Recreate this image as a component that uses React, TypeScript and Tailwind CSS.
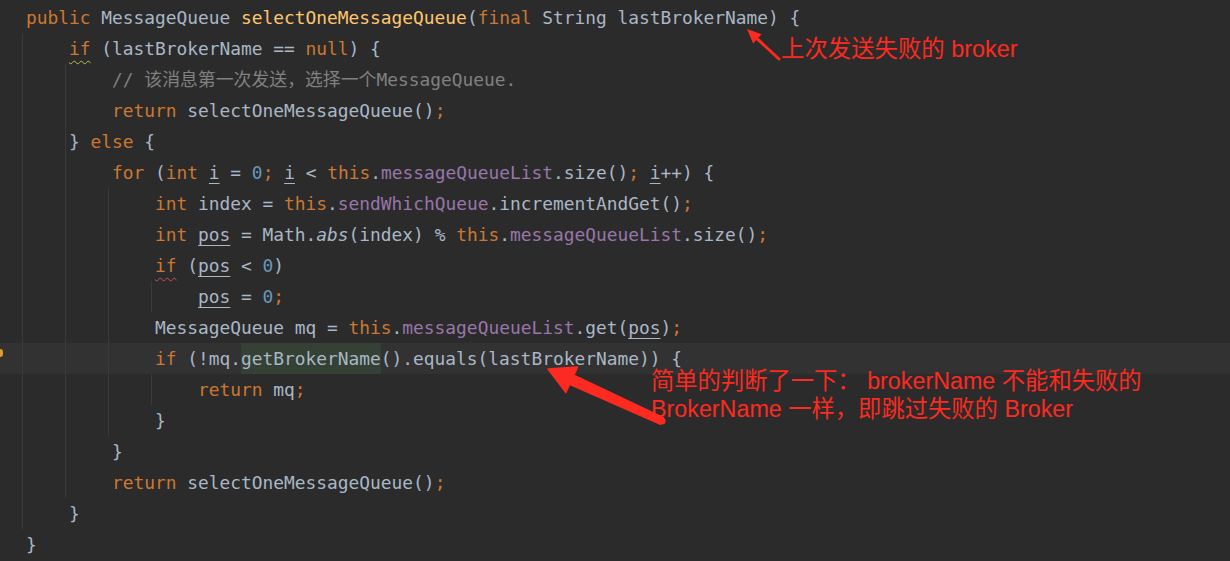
import React from "react";

type Tok = [string, string];

const S: Record<string, string> = {
  k: "text-[#cc7832]",
  p: "text-[#a9b7c6]",
  m: "text-[#ffc66d]",
  f: "text-[#9876aa]",
  n: "text-[#6897bb]",
  c: "text-[#808080]",
  i: "text-[#a9b7c6] italic",
  u: "text-[#a9b7c6] underline decoration-[#a9b7c6] underline-offset-[4px] decoration-1",
  wy: "text-[#cc7832] underline decoration-wavy decoration-[#bcbc4c] underline-offset-[5px] decoration-1",
  wr: "text-[#cc7832] underline decoration-wavy decoration-[#c9504c] underline-offset-[5px] decoration-1",
  g: "text-[#a9b7c6] bg-[#344134] inline-block",
};

type Line = { toks: Tok[]; guides: number[] };

const raw: Tok[][] = [
  [["public ", "k"], ["MessageQueue ", "p"], ["selectOneMessageQueue", "m"], ["(", "p"], ["final ", "k"], ["String lastBrokerName) {", "p"]],
  [["    ", "p"], ["if", "wy"], [" (lastBrokerName == ", "p"], ["null", "k"], [") {", "p"]],
  [["        // 该消息第一次发送，选择一个MessageQueue.", "c"]],
  [["        ", "p"], ["return ", "k"], ["selectOneMessageQueue()", "p"], [";", "k"]],
  [["    } ", "p"], ["else ", "k"], ["{", "p"]],
  [["        ", "p"], ["for ", "k"], ["(", "p"], ["int ", "k"], ["i", "u"], [" = ", "p"], ["0", "n"], ["; ", "k"], ["i", "u"], [" < ", "p"], ["this", "k"], [".", "p"], ["messageQueueList", "f"], [".size()", "p"], ["; ", "k"], ["i", "u"], ["++) {", "p"]],
  [["            ", "p"], ["int ", "k"], ["index = ", "p"], ["this", "k"], [".", "p"], ["sendWhichQueue", "f"], [".incrementAndGet()", "p"], [";", "k"]],
  [["            ", "p"], ["int ", "k"], ["pos", "u"], [" = Math.", "p"], ["abs", "i"], ["(index) % ", "p"], ["this", "k"], [".", "p"], ["messageQueueList", "f"], [".size()", "p"], [";", "k"]],
  [["            ", "p"], ["if", "wr"], [" (", "p"], ["pos", "u"], [" < ", "p"], ["0", "n"], [")", "p"]],
  [["                ", "p"], ["pos", "u"], [" = ", "p"], ["0", "n"], [";", "k"]],
  [["            MessageQueue mq = ", "p"], ["this", "k"], [".", "p"], ["messageQueueList", "f"], [".get(", "p"], ["pos", "u"], [")", "p"], [";", "k"]],
  [["            ", "p"], ["if ", "k"], ["(!mq.", "p"], ["getBrokerName", "g"], ["().equals(lastBrokerName)) {", "p"]],
  [["                ", "p"], ["return ", "k"], ["mq", "p"], [";", "k"]],
  [["            }", "p"]],
  [["        }", "p"]],
  [["        ", "p"], ["return ", "k"], ["selectOneMessageQueue()", "p"], [";", "k"]],
  [["    }", "p"]],
  [["}", "p"]],
];

// indent guide x-positions per line
const guideMap: number[][] = [
  [],
  [22],
  [22, 65],
  [22, 65],
  [22, 65],
  [22, 65],
  [22, 65, 108],
  [22, 65, 108],
  [22, 65, 108],
  [22, 65, 108, 151],
  [22, 65, 108],
  [22, 65, 108],
  [22, 65, 108, 151],
  [22, 65, 108],
  [22, 65],
  [22, 65],
  [22],
  [],
];

const lines: Line[] = raw.map((toks, i) => ({ toks, guides: guideMap[i] }));

function CodeLine({ line, active }: { line: Line; active: boolean }) {
  return (
    <div
      className={
        active
          ? "relative h-[31px] leading-[31px] whitespace-pre pl-[26px] bg-[#323232]"
          : "relative h-[31px] leading-[31px] whitespace-pre pl-[26px]"
      }
    >
      {line.guides.map((x) => (
        <span key={x} className="absolute top-0 bottom-0 w-px bg-[#3a3a3a]" style={{ left: x }} />
      ))}
      {line.toks.map(([t, s], j) => (
        <span key={j} className={"relative " + S[s]}>
          {t}
        </span>
      ))}
    </div>
  );
}

export default function App() {
  return (
    <div className="relative w-[1230px] h-[561px] overflow-hidden bg-[#2b2b2b]">
      <div className="flex flex-col pt-[2px] font-['DejaVu_Sans_Mono','Noto_Sans_CJK_SC',monospace] text-[17.86px]">
        {lines.map((line, idx) => (
          <CodeLine key={idx} line={line} active={idx === 11} />
        ))}
      </div>

      <div className="absolute left-0 top-[349px] w-[3px] h-[8px] rounded-r-sm bg-[#e39b2e]" />

      <svg className="absolute left-0 top-0" width="1230" height="561" viewBox="0 0 1230 561">
        <line x1="757" y1="38.6" x2="779" y2="59" stroke="#fc2a20" strokeWidth="3" strokeLinecap="round" />
        <polygon points="747,29 753.1,43.4 761.6,34.2" fill="#fc2a20" />
        <polygon
          points="548,369 577.5,367.1 573.8,375.3 663.5,417.8 660.5,424.2 569.6,384.4 565.9,392.5"
          fill="#fc2a20"
          stroke="#fc2a20"
          strokeWidth="1.5"
          strokeLinejoin="round"
        />
        <circle cx="662" cy="421" r="3.6" fill="#fc2a20" />
      </svg>

      <div className="absolute left-[781px] top-[35px] whitespace-pre text-[23.4px] leading-[28px] text-[#fc2a20] font-['Liberation_Sans','Noto_Sans_CJK_SC',sans-serif]">
        上次发送失败的 broker
      </div>
      <div className="absolute left-[651px] top-[367px] flex flex-col whitespace-pre text-[23.3px] leading-[28px] text-[#fc2a20] font-['Liberation_Sans','Noto_Sans_CJK_SC',sans-serif]">
        <div>简单的判断了一下： brokerName 不能和失败的</div>
        <div>BrokerName 一样，即跳过失败的 Broker</div>
      </div>
    </div>
  );
}
